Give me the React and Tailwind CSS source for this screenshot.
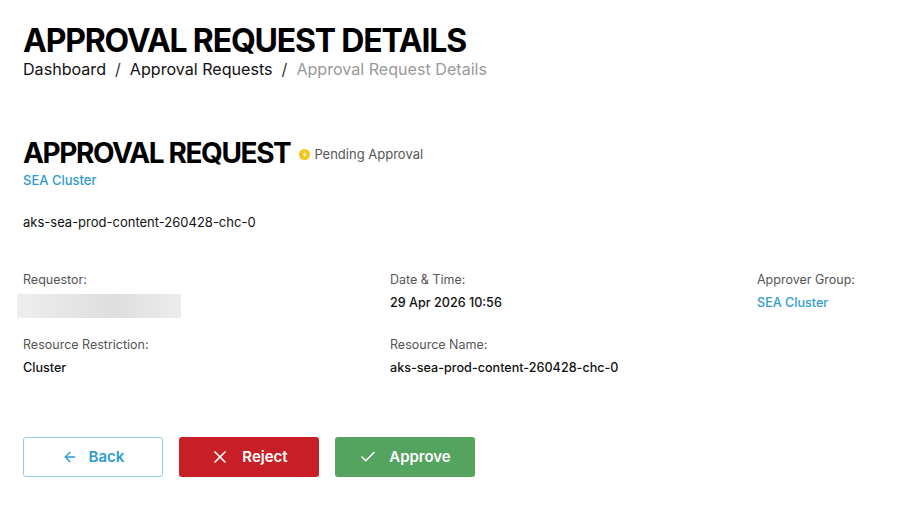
import { ArrowLeft, X, Check } from "lucide-react";

const Field = ({ label, children }) => (
  <div className="flex flex-col">
    <span className="text-[12.5px] leading-[18px] text-[#555]">{label}</span>
    <div className="mt-[5px] text-[12.6px] leading-[18px] font-medium text-[#111]">{children}</div>
  </div>
);

const App = () => {
  return (
    <div className="min-h-screen bg-white px-[23px] pt-[24px] font-['Inter',sans-serif] text-black">
      {/* Page header */}
      <h1 className="text-[32px] leading-[34px] font-bold tracking-[-1.2px]">APPROVAL REQUEST DETAILS</h1>
      <nav className="flex items-center gap-[9px] text-[16.1px] leading-[22px]">
        <span className="text-[#111]">Dashboard</span>
        <span className="text-[#333]">/</span>
        <span className="text-[#111]">Approval Requests</span>
        <span className="text-[#333]">/</span>
        <span className="text-[#999]">Approval Request Details</span>
      </nav>

      {/* Request summary */}
      <div className="mt-[57px] flex items-end gap-[9px]">
        <h2 className="text-[28px] leading-[32px] font-bold tracking-[-1.4px]">APPROVAL REQUEST</h2>
        <div className="mb-[5px] flex items-center gap-[4px] text-[13px] text-[#555]">
          <svg width="11" height="11" viewBox="0 0 12 12">
            <circle cx="6" cy="6" r="6" fill="#f5c518" />
            <path d="M6.8 2.3 L3.8 6.6 H5.9 L5.2 9.7 L8.2 5.4 H6.1 Z" fill="#fff" />
          </svg>
          <span>Pending Approval</span>
        </div>
      </div>
      <div className="mt-[2px] text-[13px] leading-[18px] font-medium text-[#2f9bd1]">SEA Cluster</div>
      <div className="mt-[24px] text-[13px] leading-[18px] text-[#111]">aks-sea-prod-content-260428-chc-0</div>

      {/* Details grid */}
      <div className="mt-[40px] grid grid-cols-[367px_367px_1fr] gap-y-[18px]">
        <Field label="Requestor:">
          <div className="-ml-[6px] h-[24px] w-[164px] bg-[linear-gradient(90deg,#eeeeee,#e3e3e3_40%,#dedede_60%,#ececec)]" />
        </Field>
        <Field label="Date & Time:">29 Apr 2026 10:56</Field>
        <Field label="Approver Group:">
          <span className="text-[#2f9bd1]">SEA Cluster</span>
        </Field>
        <Field label="Resource Restriction:">Cluster</Field>
        <Field label="Resource Name:">aks-sea-prod-content-260428-chc-0</Field>
      </div>

      {/* Actions */}
      <div className="mt-[60px] flex gap-[16px]">
        <button className="flex h-[40px] w-[140px] items-center justify-center gap-[11px] rounded-[3px] border border-[#93cbe6] text-[15px] font-semibold text-[#2f9bd1]">
          <ArrowLeft size={16} strokeWidth={2} />
          Back
        </button>
        <button className="flex h-[40px] w-[140px] items-center justify-center gap-[12px] rounded-[3px] bg-[#c81e25] text-[15px] font-semibold text-white">
          <X size={20} strokeWidth={2} />
          Reject
        </button>
        <button className="flex h-[40px] w-[140px] items-center justify-center gap-[12px] rounded-[3px] bg-[#54a35f] text-[15px] font-semibold text-white">
          <Check size={18} strokeWidth={2} />
          Approve
        </button>
      </div>
    </div>
  );
};

export default App;
